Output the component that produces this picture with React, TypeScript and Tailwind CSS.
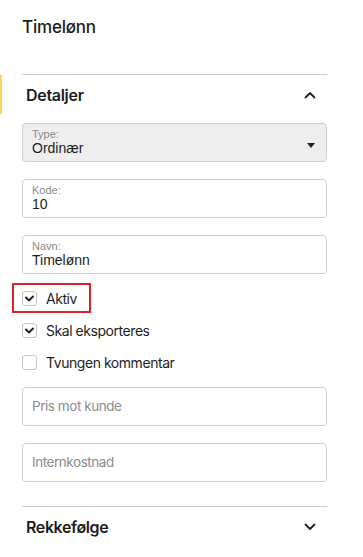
import React from "react";

const sans = { fontFamily: "Inter, 'Noto Sans', sans-serif" };
const arial = { fontFamily: "'Liberation Sans', Arial, sans-serif" };

function ChevronUp() {
  return (
    <svg width="12" height="8" viewBox="0 0 12 8" fill="none">
      <polyline points="1.5,6.5 6,2 10.5,6.5" stroke="#222" strokeWidth="1.8" strokeLinecap="round" strokeLinejoin="round" />
    </svg>
  );
}
function ChevronDown() {
  return (
    <svg width="12" height="8" viewBox="0 0 12 8" fill="none">
      <polyline points="1.5,1.5 6,6 10.5,1.5" stroke="#222" strokeWidth="1.8" strokeLinecap="round" strokeLinejoin="round" />
    </svg>
  );
}

function Checkbox({ checked }: { checked: boolean }) {
  return (
    <div className="w-[15px] h-[15px] rounded-[3px] border border-[#c6c6c6] bg-white flex items-center justify-center shrink-0">
      {checked && (
        <svg width="9" height="7" viewBox="0 0 9 7" fill="none">
          <polyline points="1,2.5 4,5.5 8,1.5" stroke="#222" strokeWidth="2" strokeLinecap="round" strokeLinejoin="round" />
        </svg>
      )}
    </div>
  );
}

function LabeledBox({ label, value, gray }: { label: string; value: string; gray?: boolean }) {
  return (
    <div
      className={`relative h-[39px] rounded-[4px] border border-[#cfcfcf] pt-[4px] pl-[9px] pr-[10px] ${gray ? "bg-[#eeeeee]" : "bg-white"}`}
      style={arial}
    >
      <div className="text-[11px] leading-[12px] text-[#8a8a8a]">{label}</div>
      <div className="text-[14px] leading-[16px] text-[#1e1e1e]">{value}</div>
      {gray && (
        <svg className="absolute right-[11px] top-[19px]" width="8" height="5" viewBox="0 0 8 5">
          <polygon points="0,0 8,0 4,5" fill="#222" />
        </svg>
      )}
    </div>
  );
}

function PlainInput({ placeholder }: { placeholder: string }) {
  return (
    <div className="h-[39px] rounded-[4px] border border-[#cfcfcf] bg-white flex items-center pl-[9px]" style={sans}>
      <span className="text-[13.5px] text-[#8c8c8c] tracking-[-0.45px]">{placeholder}</span>
    </div>
  );
}

function CheckRow({ label, checked, highlight }: { label: string; checked: boolean; highlight?: boolean }) {
  return (
    <div className="relative flex items-center gap-[9px] h-[15px]" style={sans}>
      <Checkbox checked={checked} />
      <span className="text-[14px] text-[#1e1e1e] tracking-[-0.45px]">{label}</span>
      {highlight && (
        <div className="absolute -left-[10px] -top-[8px] w-[79px] h-[30px] border-2 border-[#e0202b]" />
      )}
    </div>
  );
}

export default function App() {
  return (
    <div className="w-[363px] h-[557px] bg-white overflow-hidden" style={sans}>
      <div className="pl-[22px] pt-[15px] text-[17px] leading-[24px] font-medium text-[#1c1c1c] tracking-[-0.2px]">
        Timelønn
      </div>
      <div className="mt-[35px] ml-[22px] w-[305px] h-px bg-[#cccccc]" />
      <div className="flex h-[39px]">
        <div className="w-[2px] bg-[#fdd54f]" />
        <div className="w-[20px]" />
        <div className="w-[305px] flex items-center justify-between pl-[4px] pr-[11px]">
          <span className="text-[16px] font-semibold text-[#1c1c1c] tracking-[-0.3px]">Detaljer</span>
          <ChevronUp />
        </div>
      </div>
      <div className="ml-[22px] w-[305px] pt-[9px] flex flex-col gap-[17px]">
        <LabeledBox label="Type:" value="Ordinær" gray />
        <LabeledBox label="Kode:" value="10" />
        <LabeledBox label="Navn:" value="Timelønn" />
        <CheckRow label="Aktiv" checked highlight />
        <CheckRow label="Skal eksporteres" checked />
        <CheckRow label="Tvungen kommentar" checked={false} />
        <PlainInput placeholder="Pris mot kunde" />
        <PlainInput placeholder="Internkostnad" />
      </div>
      <div className="mt-[24px] ml-[22px] w-[305px] h-px bg-[#cccccc]" />
      <div className="ml-[22px] w-[305px] h-[39px] flex items-center justify-between pl-[4px] pr-[11px]">
        <span className="text-[16px] font-semibold text-[#1c1c1c] tracking-[-0.4px]">Rekkefølge</span>
        <ChevronDown />
      </div>
    </div>
  );
}
